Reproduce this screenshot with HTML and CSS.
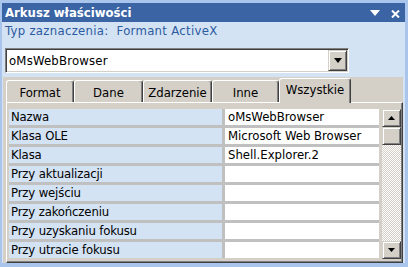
FILE: index.html
```html
<!DOCTYPE html>
<html lang="pl">
<head>
<meta charset="utf-8">
<title>Arkusz właściwości</title>
<link rel="stylesheet" href="styles.css">
</head>
<body>
<div class="window">
  <div class="title">
    <span class="title-text">Arkusz właściwości</span>
    <span class="title-btns">
      <svg class="tb-down" width="10" height="6" viewBox="0 0 10 6"><polygon points="0,0 10,0 5,6" fill="#fff"/></svg>
      <svg class="tb-close" width="9" height="8" viewBox="0 0 9 8"><path d="M1 0.5 L8 7.5 M8 0.5 L1 7.5" stroke="#fff" stroke-width="2"/></svg>
    </span>
  </div>
  <div class="info">Typ zaznaczenia:&nbsp; Formant ActiveX</div>
  <div class="combo">
    <span class="combo-text">oMsWebBrowser</span>
    <span class="btn combo-btn"><svg width="8" height="5" viewBox="0 0 8 5"><polygon points="0,0 8,0 4,5" fill="#000"/></svg></span>
  </div>
  <div class="tabctl">
    <div class="tabs">
      <div class="tab t1">Format</div>
      <div class="tab t2">Dane</div>
      <div class="tab t3">Zdarzenie</div>
      <div class="tab t4">Inne</div>
      <div class="tab sel">Wszystkie</div>
    </div>
    <div class="page">
      <div class="grid">
        <div class="lbl">Nazwa</div><div class="val">oMsWebBrowser</div>
        <div class="lbl">Klasa OLE</div><div class="val">Microsoft Web Browser</div>
        <div class="lbl">Klasa</div><div class="val">Shell.Explorer.2</div>
        <div class="lbl">Przy aktualizacji</div><div class="val"></div>
        <div class="lbl">Przy wejściu</div><div class="val"></div>
        <div class="lbl">Przy zakończeniu</div><div class="val"></div>
        <div class="lbl">Przy uzyskaniu fokusu</div><div class="val"></div>
        <div class="lbl">Przy utracie fokusu</div><div class="val"></div>
      </div>
      <div class="scroll">
        <span class="btn sb-btn"><svg width="7" height="4" viewBox="0 0 7 4"><polygon points="0,4 7,4 3.5,0" fill="#000"/></svg></span>
        <span class="btn sb-thumb"></span>
        <span class="sb-track"></span>
        <span class="btn sb-btn"><svg width="7" height="4" viewBox="0 0 7 4"><polygon points="0,0 7,0 3.5,4" fill="#000"/></svg></span>
      </div>
    </div>
  </div>
</div>
</body>
</html>
```

FILE: styles.css
```css
html, body {
  margin: 0;
  padding: 0;
}
body {
  width: 408px;
  height: 267px;
  overflow: hidden;
  font-family: "DejaVu Sans Condensed", "DejaVu Sans", "Liberation Sans", sans-serif;
  font-size: 13px;
}
.window {
  width: 408px;
  height: 267px;
  box-sizing: border-box;
  border-style: solid;
  border-color: #a9c5ec;
  border-width: 3px 3px 4px 2px;
  background: #d4e3f4;
  display: flex;
  flex-direction: column;
}
.title {
  height: 19px;
  flex: none;
  background: #3b64a5;
  display: flex;
  align-items: center;
  justify-content: space-between;
  padding-left: 3px;
  padding-right: 5px;
  color: #fff;
}
.title-text {
  font-weight: bold;
  font-size: 13px;
  line-height: 19px;
}
.title-btns {
  display: flex;
  align-items: center;
  gap: 11px;
}
.tb-close {
  margin-top: 2px;
}
.info {
  height: 26px;
  flex: none;
  box-sizing: border-box;
  padding: 2px 0 0 3px;
  line-height: 14px;
  color: #2c5aa0;
  letter-spacing: 0.3px;
  white-space: pre;
}
.combo {
  flex: none;
  margin-left: 3px;
  width: 344px;
  height: 25px;
  box-sizing: border-box;
  border: 1px solid;
  border-color: #808080 #ffffff #ffffff #808080;
  box-shadow: inset 1px 1px #404040, inset -1px -1px #d4d0c8;
  padding: 1px;
  background: #fff;
  display: flex;
  align-items: stretch;
}
.combo-text {
  flex: 1;
  padding-left: 2px;
  line-height: 21px;
  color: #000;
  letter-spacing: 0.2px;
}
.btn {
  background: #d4d0c8;
  box-sizing: border-box;
  border: 1px solid;
  border-color: #d4d0c8 #404040 #404040 #d4d0c8;
  box-shadow: inset 1px 1px #fff, inset -1px -1px #808080;
  display: flex;
  align-items: center;
  justify-content: center;
}
.combo-btn {
  width: 19px;
}
.tabctl {
  flex: 1;
  margin: 4px 2px 0 1px;
  background: #d4d0c8;
  display: flex;
  flex-direction: column;
}
.tabs {
  height: 25px;
  flex: none;
  display: flex;
  align-items: flex-end;
  padding-left: 3px;
}
.tab {
  height: 22px;
  box-sizing: border-box;
  border-top: 1px solid #fff;
  border-left: 1px solid #fff;
  border-right: 1px solid #404040;
  box-shadow: inset -1px 0 #808080;
  border-radius: 3px 3px 0 0;
  padding-top: 2px;
  line-height: 19px;
  text-align: center;
  color: #000;
}
.t1 { width: 68px; }
.t2 { width: 69px; }
.t3 { width: 69px; }
.t4 { width: 67px; }
.sel {
  width: 72px;
  height: 25px;
  margin-bottom: -1px;
  position: relative;
  z-index: 1;
  background: #d4d0c8;
  padding-top: 1px;
}
.page {
  flex: 1;
  margin-left: 3px;
  box-sizing: border-box;
  border-top: 1px solid #fff;
  border-left: 1px solid #fff;
  border-right: 1px solid #404040;
  border-bottom: 1px solid #404040;
  box-shadow: inset -1px -1px #808080;
  padding: 6px 1px 0 2px;
  display: flex;
  gap: 3px;
  align-items: flex-start;
}
.grid {
  width: 370px;
  display: grid;
  grid-template-columns: 213px 154px;
  grid-auto-rows: 16px;
  gap: 3px;
  background: #c0c0c0;
}
.lbl, .val {
  line-height: 16px;
  white-space: nowrap;
  overflow: hidden;
  color: #000;
}
.lbl {
  background: #d4e3f4;
  padding-left: 2px;
  letter-spacing: -0.15px;
}
.val {
  background: #fff;
  padding-left: 3px;
}
.scroll {
  width: 19px;
  height: 150px;
  display: flex;
  flex-direction: column;
}
.sb-btn {
  height: 18px;
  flex: none;
}
.sb-thumb {
  height: 18px;
  flex: none;
}
.sb-track {
  flex: 1;
  background: repeating-conic-gradient(#ffffff 0 25%, #d4d0c8 0 50%) 0 0 / 2px 2px;
}
```
